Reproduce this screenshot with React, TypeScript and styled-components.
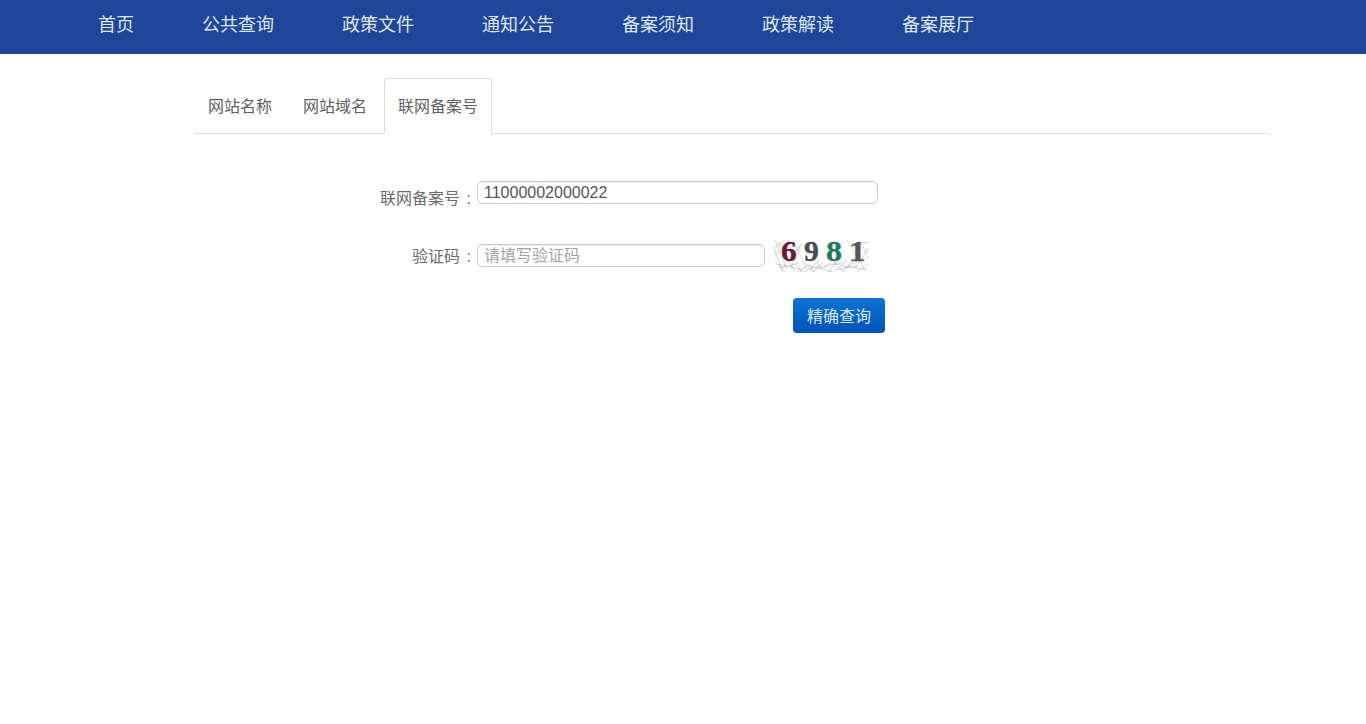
import React from "react";
import styled, { createGlobalStyle } from "styled-components";

const Global = createGlobalStyle`
  html, body { margin: 0; padding: 0; background: #fff; }
  body { font-family: "Liberation Sans", "Noto Sans CJK SC", sans-serif; }
`;

const Page = styled.div`
  min-height: 724px;
  background: #fff;
`;

const NavBar = styled.nav`
  display: flex;
  height: 54px;
  padding-left: 64px;
  background: #1f4699;
`;

const NavItem = styled.a`
  padding: 0 34px;
  height: 50px;
  line-height: 50px;
  font-size: 18px;
  color: #dfe7f5;
  white-space: nowrap;
`;

const Content = styled.main`
  margin: 24px 97px 0 194px;
`;

const Tabs = styled.ul`
  display: flex;
  gap: 3px;
  height: 55px;
  margin: 0;
  padding: 0;
  list-style: none;
  border-bottom: 1px solid #ddd;
`;

const Tab = styled.li<{ $active?: boolean }>`
  box-sizing: border-box;
  height: 56px;
  padding: 0 13px;
  line-height: 56px;
  font-size: 16px;
  color: #5f5f5f;
  background: ${(p) => (p.$active ? "#fff" : "transparent")};
  border: 1px solid ${(p) => (p.$active ? "#ddd" : "transparent")};
  border-bottom-color: ${(p) => (p.$active ? "#fff" : "transparent")};
  border-radius: 4px 4px 0 0;
`;

const Form = styled.form`
  display: grid;
  grid-template-columns: 277px auto;
  justify-content: start;
  column-gap: 6px;
  padding-top: 47px;
`;

const Label = styled.label<{ $rowHeight: number; $offset: number }>`
  height: ${(p) => p.$rowHeight}px;
  padding-top: ${(p) => p.$offset}px;
  box-sizing: border-box;
  text-align: right;
  font-size: 16px;
  line-height: 20px;
  color: #6c6c6c;
  white-space: nowrap;
`;

const Colon = styled.span`
  margin-left: 2px;
`;

const Field = styled.div<{ $rowHeight: number }>`
  display: flex;
  align-items: flex-start;
  height: ${(p) => p.$rowHeight}px;
`;

const Input = styled.input<{ $width: number }>`
  box-sizing: border-box;
  width: ${(p) => p.$width}px;
  height: 23px;
  padding: 0 6px;
  font: 16px "Liberation Sans", "Noto Sans CJK SC", sans-serif;
  color: #555;
  background: #fff;
  border: 1px solid #ccc;
  border-radius: 5px;
  box-shadow: inset 0 1px 1px rgba(0, 0, 0, 0.075);
  outline: none;
  &::placeholder {
    color: #a5a5a5;
    opacity: 1;
  }
`;

const Captcha = styled.svg`
  display: block;
  width: 98px;
  height: 40px;
  margin: -10px 0 0 8px;
`;

const SubmitCell = styled.div`
  grid-column: 2;
  display: flex;
  padding-left: 316px;
`;

const Submit = styled.button`
  box-sizing: border-box;
  width: 92px;
  height: 35px;
  padding: 0 0 1px;
  font: 16px "Liberation Sans", "Noto Sans CJK SC", sans-serif;
  color: #dbe8f8;
  background: linear-gradient(to bottom, #0b74d4, #0052b8);
  border: none;
  border-radius: 4px;
`;

const noise = [
  "M2 2L14 32M6 4L22 34M1 18L16 6M10 30L26 8M20 2L34 32M28 6L18 30M0 8L10 34M14 2L28 34",
  "M32 24L40 34M38 30L46 22M44 24L50 32M52 30L60 22M60 24L70 34M66 30L74 22M40 34L50 24M56 34L66 20",
  "M74 2L92 32M82 30L96 10M88 4L96 22M4 26L30 32M36 28L60 34M62 26L94 32M70 34L80 22M84 34L96 26",
  "M2 10L12 2M12 34L2 24M24 34L38 26M46 30L70 24M72 30L90 20M78 6L96 4M6 30L24 26M30 34L46 28M60 32L84 28",
];

const digits = [
  { ch: "6", x: 8, sx: 1.08, fill: "#6b1836" },
  { ch: "9", x: 31, sx: 1.02, fill: "#4a4a50" },
  { ch: "8", x: 53, sx: 1.1, fill: "#1c7a5c" },
  { ch: "1", x: 76, sx: 1.15, fill: "#55565a" },
];

function CaptchaImage() {
  return (
    <Captcha viewBox="0 -4 98 40" role="img" aria-label="6981">
      {noise.map((d, i) => (
        <path key={i} d={d} stroke={i % 2 ? "#bfa5ad" : "#b3b9b4"} strokeWidth="0.6" fill="none" />
      ))}
      <g fontFamily="'Liberation Serif', serif" fontSize="29" fontWeight="700">
        {digits.map((d) => (
          <text
            key={d.ch}
            transform={`translate(${d.x} 23) scale(${d.sx} 1)`}
            fill={d.fill}
            stroke={d.fill}
            strokeWidth="0.4"
          >
            {d.ch}
          </text>
        ))}
      </g>
    </Captcha>
  );
}

const navItems = ["首页", "公共查询", "政策文件", "通知公告", "备案须知", "政策解读", "备案展厅"];

export default function App() {
  return (
    <Page>
      <Global />
      <NavBar>
        {navItems.map((n) => (
          <NavItem key={n}>{n}</NavItem>
        ))}
      </NavBar>
      <Content>
        <Tabs>
          <Tab>网站名称</Tab>
          <Tab>网站域名</Tab>
          <Tab $active>联网备案号</Tab>
        </Tabs>
        <Form onSubmit={(e) => e.preventDefault()}>
          <Label $rowHeight={63} $offset={8}>联网备案号<Colon> :</Colon></Label>
          <Field $rowHeight={63}>
            <Input $width={401} defaultValue="11000002000022" />
          </Field>
          <Label $rowHeight={54} $offset={3}>验证码<Colon> :</Colon></Label>
          <Field $rowHeight={54}>
            <Input $width={288} placeholder="请填写验证码" />
            <CaptchaImage />
          </Field>
          <SubmitCell>
            <Submit type="submit">精确查询</Submit>
          </SubmitCell>
        </Form>
      </Content>
    </Page>
  );
}
